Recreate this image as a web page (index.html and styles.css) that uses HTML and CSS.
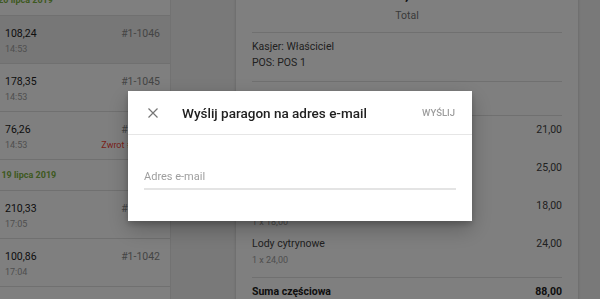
FILE: index.html
```html
<!DOCTYPE html>
<html lang="pl">
<head>
    <meta charset="UTF-8">
    <meta name="viewport" content="width=device-width, initial-scale=1.0">
    <title>Paragony</title>
    <link rel="stylesheet" href="styles.css">
</head>
<body>
    <div class="app">
        <aside class="receipts">
            <div class="day"><span>sobota, 20 lipca 2019</span></div>
            <div class="row selected">
                <div class="row-main">
                    <div class="amount">108,24</div>
                    <div class="time">14:53</div>
                </div>
                <div class="row-side">
                    <div class="number">#1-1046</div>
                </div>
            </div>
            <div class="row">
                <div class="row-main">
                    <div class="amount">178,35</div>
                    <div class="time">14:53</div>
                </div>
                <div class="row-side">
                    <div class="number">#1-1045</div>
                </div>
            </div>
            <div class="row">
                <div class="row-main">
                    <div class="amount">76,26</div>
                    <div class="time">14:53</div>
                </div>
                <div class="row-side">
                    <div class="number">#1-1044</div>
                    <div class="refund">Zwrot #1-1041</div>
                </div>
            </div>
            <div class="day day-friday"><span>piątek, 19 lipca 2019</span></div>
            <div class="row">
                <div class="row-main">
                    <div class="amount">210,33</div>
                    <div class="time">17:05</div>
                </div>
                <div class="row-side">
                    <div class="number">#1-1043</div>
                </div>
            </div>
            <div class="row">
                <div class="row-main">
                    <div class="amount">100,86</div>
                    <div class="time">17:04</div>
                </div>
                <div class="row-side">
                    <div class="number">#1-1042</div>
                </div>
            </div>
            <div class="row">
                <div class="row-main">
                    <div class="amount">54,00</div>
                    <div class="time">16:40</div>
                </div>
                <div class="row-side">
                    <div class="number">#1-1041</div>
                </div>
            </div>
        </aside>

        <main class="content">
            <div class="receipt">
                <div class="receipt-total">
                    <div class="total-value">88,00</div>
                    <div class="total-label">Total</div>
                </div>
                <div class="receipt-info">
                    <div>Kasjer: Właściciel</div>
                    <div>POS: POS 1</div>
                </div>
                <div class="receipt-note">Paragon #1-1046</div>
                <div class="receipt-items">
                    <div class="item">
                        <div class="item-line"><span>Kawa latte</span><span>21,00</span></div>
                        <div class="item-qty">1 x 21,00</div>
                    </div>
                    <div class="item">
                        <div class="item-line"><span>Sernik</span><span>25,00</span></div>
                        <div class="item-qty">1 x 25,00</div>
                    </div>
                    <div class="item">
                        <div class="item-line"><span>Lody waniliowe</span><span>18,00</span></div>
                        <div class="item-qty">1 x 18,00</div>
                    </div>
                    <div class="item">
                        <div class="item-line"><span>Lody cytrynowe</span><span>24,00</span></div>
                        <div class="item-qty">1 x 24,00</div>
                    </div>
                </div>
                <div class="receipt-sum">
                    <span>Suma częściowa</span><span>88,00</span>
                </div>
            </div>
        </main>
    </div>

    <div class="overlay">
        <div class="dialog">
            <div class="dialog-header">
                <button class="dialog-close" aria-label="Zamknij">
                    <svg width="10" height="10" viewBox="0 0 10 10">
                        <path d="M0.5 0.5L9.5 9.5M9.5 0.5L0.5 9.5" stroke="#757575" stroke-width="1.2" fill="none"/>
                    </svg>
                </button>
                <div class="dialog-title">Wyślij paragon na adres e-mail</div>
                <button class="dialog-action" disabled>Wyślij</button>
            </div>
            <div class="dialog-body">
                <input class="email-input" type="email" placeholder="Adres e-mail">
            </div>
        </div>
    </div>
</body>
</html>
```

FILE: styles.css
```css
body {
    font-family: Roboto, 'Liberation Sans', sans-serif;
    margin: 0;
    padding: 0;
    background-color: #f2f2f2;
    color: #212121;
    overflow: hidden;
}

.app {
    display: flex;
    height: 299px;
    overflow: hidden;
}

/* list of receipts */
.receipts {
    width: 170px;
    flex-shrink: 0;
    background-color: #fff;
    border-right: 1px solid #e4e4e4;
    margin-top: -15px;
    overflow: hidden;
}

.day {
    height: 31px;
    line-height: 31px;
    font-size: 9px;
    font-weight: 700;
    color: #7cb342;
    white-space: nowrap;
    border-bottom: 1px solid #e0e0e0;
    box-sizing: border-box;
}

.day span {
    margin-left: -34px;
}

.day-friday span {
    margin-left: -28px;
}

.row {
    display: flex;
    justify-content: space-between;
    height: 48px;
    padding: 11px 10px 0 5px;
    box-sizing: border-box;
    border-bottom: 1px solid #e0e0e0;
}

.row.selected {
    background-color: #eeeeee;
}

.amount,
.number {
    font-size: 10.5px;
    line-height: 14px;
}

.number {
    color: #8a8a8a;
    text-align: right;
}

.time,
.refund {
    font-size: 9px;
    line-height: 12px;
    margin-top: 2px;
    color: #9e9e9e;
}

.refund {
    color: #f44336;
    text-align: right;
}

/* receipt preview */
.content {
    flex: 1;
    padding: 0 22px 0 65px;
}

.receipt {
    background-color: #fff;
    margin-top: -36px;
    padding: 14px 16px 0;
    box-shadow: 0 1px 3px rgba(0,0,0,0.2);
    font-size: 10.5px;
    color: #424242;
    min-height: 400px;
}

.receipt-total {
    text-align: center;
    padding-bottom: 9px;
}

.total-value {
    font-size: 21px;
    line-height: 28px;
    color: #212121;
}

.total-label {
    line-height: 14px;
    margin-top: 3px;
    color: #757575;
}

.receipt-info {
    border-top: 1px solid #e0e0e0;
    padding: 6px 0 10px;
    line-height: 16px;
}

.receipt-note {
    border-top: 1px solid #e0e0e0;
    padding: 9px 0;
    line-height: 15px;
}

.receipt-items {
    border-top: 1px solid #e0e0e0;
    padding-bottom: 9px;
}

.item {
    padding-top: 6px;
}

.item-line,
.receipt-sum {
    display: flex;
    justify-content: space-between;
    line-height: 16px;
}

.item-qty {
    font-size: 9px;
    line-height: 16px;
    color: #9e9e9e;
}

.receipt-sum {
    border-top: 1px solid #e0e0e0;
    padding-top: 6px;
    font-weight: 700;
    color: #212121;
}

/* email dialog */
.overlay {
    position: fixed;
    top: 0;
    left: 0;
    right: 0;
    bottom: 0;
    background-color: rgba(0,0,0,0.5);
    display: flex;
    justify-content: center;
    align-items: flex-start;
}

.dialog {
    width: 344px;
    margin-top: 91px;
    background-color: #fff;
    box-shadow: 0 8px 20px rgba(0,0,0,0.25), 0 3px 6px rgba(0,0,0,0.2);
}

.dialog-header {
    display: flex;
    align-items: center;
    height: 43px;
    padding: 0 17px 0 20px;
    border-bottom: 1px solid #e6e6e6;
}

.dialog-close {
    display: flex;
    padding: 0;
    border: none;
    background: none;
    width: 10px;
    height: 10px;
}

.dialog-title {
    flex: 1;
    margin-left: 24px;
    font-size: 13.5px;
    font-weight: 500;
    color: #212121;
}

.dialog-action {
    padding: 0;
    border: none;
    background: none;
    font-family: Roboto, 'Liberation Sans', sans-serif;
    font-size: 9.5px;
    font-weight: 500;
    text-transform: uppercase;
    color: #9e9e9e;
}

.dialog-body {
    padding: 35px 16px 31px;
}

.email-input {
    display: block;
    width: 100%;
    box-sizing: border-box;
    border: none;
    border-bottom: 2px solid #e4e4e4;
    padding: 0 0 4px;
    outline: none;
    font-family: Roboto, 'Liberation Sans', sans-serif;
    font-size: 11px;
    line-height: 14px;
    color: #212121;
}

.email-input::placeholder {
    color: #9e9e9e;
}
```
